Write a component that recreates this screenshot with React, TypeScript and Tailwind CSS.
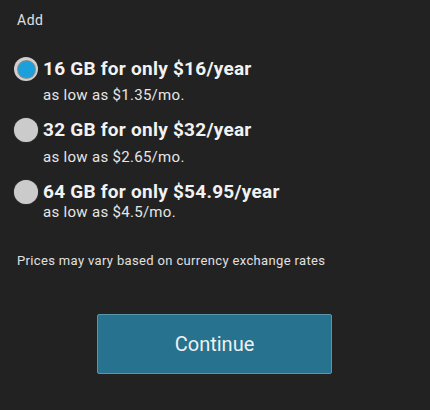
import React from "react";

function Radio({ checked }: { checked: boolean }) {
  if (checked) {
    return (
      <div className="w-[24px] h-[24px] rounded-full bg-[#cfcfcf] flex items-center justify-center shrink-0">
        <div className="w-[19px] h-[19px] rounded-full bg-[#8a8a8a] flex items-center justify-center">
          <div className="w-[17px] h-[17px] rounded-full bg-[#1ca0dc]" />
        </div>
      </div>
    );
  }
  return <div className="w-[24px] h-[24px] rounded-full bg-[#cbcbcb] shrink-0 shadow-[0_0_1px_#888]" />;
}

function Option({
  checked,
  title,
  sub,
  subClass,
  className,
}: {
  checked: boolean;
  title: string;
  sub: string;
  subClass: string;
  className: string;
}) {
  return (
    <div className={"flex pl-[14px] " + className}>
      <Radio checked={checked} />
      <div className="ml-[5px] flex flex-col">
        <div className="text-[19px] leading-[24px] font-bold tracking-[0.25px] text-[#f2f2f2]">{title}</div>
        <div className={"text-[15px] leading-[20px] tracking-[0.3px] text-[#e6e6e6] " + subClass}>{sub}</div>
      </div>
    </div>
  );
}

export default function App() {
  return (
    <div
      className="w-[430px] h-[410px] bg-[#222222] overflow-hidden flex flex-col"
      style={{ fontFamily: "Roboto, 'Noto Sans', sans-serif" }}
    >
      <div className="pl-[17px] h-[40px] leading-[40px] text-[14px] tracking-[0.5px] text-[#e0e0e0]">Add</div>
      <Option checked title="16 GB for only $16/year" sub="as low as $1.35/mo." subClass="mt-[4px]" className="mt-[17px]" />
      <Option checked={false} title="32 GB for only $32/year" sub="as low as $2.65/mo." subClass="mt-[5px]" className="mt-[13px]" />
      <Option checked={false} title="64 GB for only $54.95/year" sub="as low as $4.5/mo." subClass="mt-[-2px]" className="mt-[13px]" />
      <div className="pl-[17px] mt-[29px] h-[20px] leading-[20px] text-[13px] tracking-[0.35px] text-[#e0e0e0]">
        Prices may vary based on currency exchange rates
      </div>
      <div className="mt-[43px] ml-[97px] w-[235px] h-[60px] bg-[#26728f] border border-[#5896ad] rounded-[2px] flex items-center justify-center text-[20px] text-[#f0f0f0]">
        Continue
      </div>
    </div>
  );
}
